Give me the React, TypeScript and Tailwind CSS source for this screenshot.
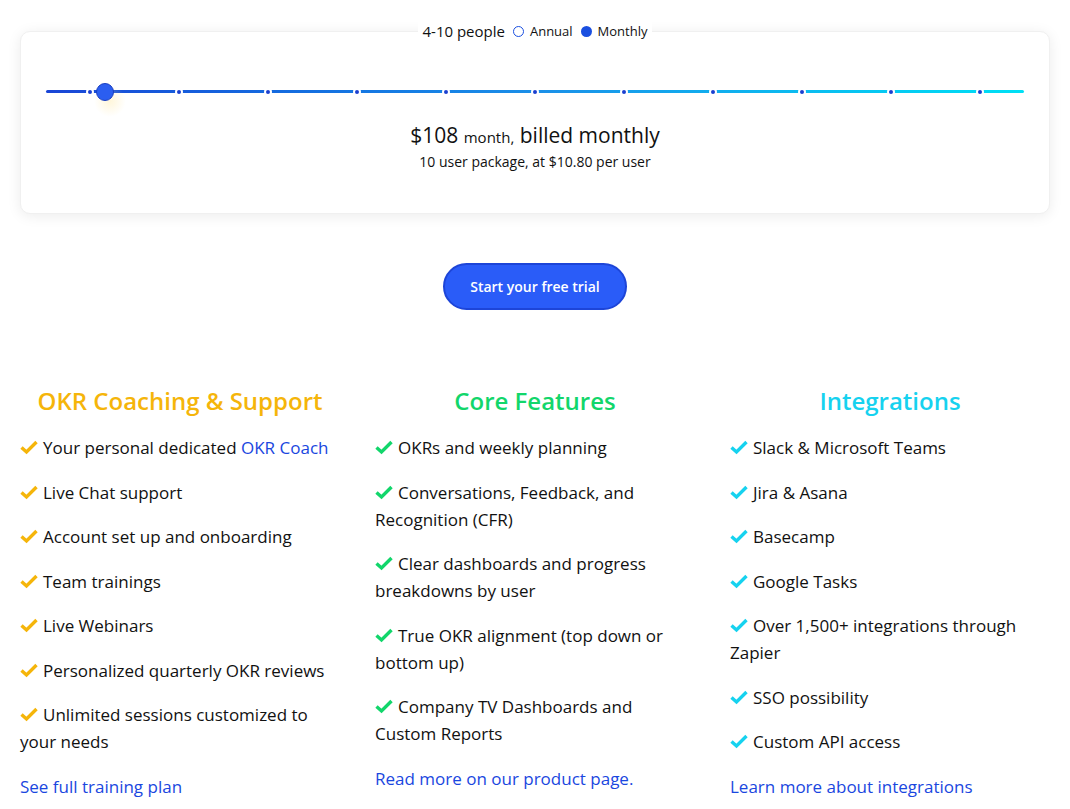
import React from "react";

const cols = [
  {
    title: "OKR Coaching & Support",
    color: "text-[#f5b50a]",
    items: [
      <>Your personal dedicated <a className="text-[#1a47e0]">OKR Coach</a></>,
      <>Live Chat support</>,
      <>Account set up and onboarding</>,
      <>Team trainings</>,
      <>Live Webinars</>,
      <>Personalized quarterly OKR reviews</>,
      <>Unlimited sessions customized to your needs</>,
    ],
    link: "See full training plan",
  },
  {
    title: "Core Features",
    color: "text-[#12d66b]",
    items: [
      <>OKRs and weekly planning</>,
      <>Conversations, Feedback, and Recognition (CFR)</>,
      <>Clear dashboards and progress breakdowns by user</>,
      <>True OKR alignment (top down or bottom up)</>,
      <>Company TV Dashboards and Custom Reports</>,
    ],
    link: "Read more on our product page.",
  },
  {
    title: "Integrations",
    color: "text-[#16d2ef]",
    items: [
      <>Slack &amp; Microsoft Teams</>,
      <>Jira &amp; Asana</>,
      <>Basecamp</>,
      <>Google Tasks</>,
      <>Over 1,500+ integrations through Zapier</>,
      <>SSO possibility</>,
      <>Custom API access</>,
    ],
    link: "Learn more about integrations",
  },
];

function Check({ className }: { className: string }) {
  return (
    <svg
      viewBox="0 0 18 15"
      className={`inline-block w-[18px] h-[15px] mr-[5px] align-[-1px] ${className}`}
      fill="none"
      stroke="currentColor"
      strokeWidth="3.4"
      strokeLinecap="butt"
      strokeLinejoin="miter"
    >
      <path d="M1.5 7.5 L6.5 12 L16.5 2" />
    </svg>
  );
}

export default function App() {
  return (
    <div
      className="w-[1070px] h-[809px] overflow-hidden bg-white text-[#111]"
      style={{ fontFamily: "'Open Sans', 'Noto Sans', sans-serif" }}
    >
      <div className="pt-[31px] px-[20px]">
        <div className="relative h-[183px] rounded-[10px] bg-white shadow-[0_2px_14px_rgba(0,0,0,0.08)] border border-[#f0f0f0]">
          <div className="absolute left-0 right-0 top-[-12px] flex justify-center">
            <div className="flex items-center gap-[6px] bg-white px-[4px] text-[13px]">
              <span className="text-[15px] font-medium mr-[2px]">4-10 people</span>
              <span className="w-[11px] h-[11px] rounded-full border-[1.5px] border-[#1a4fe0]"></span>
              <span>Annual</span>
              <span className="w-[11px] h-[11px] rounded-full bg-[#1a4fe0] ml-[2px]"></span>
              <span>Monthly</span>
            </div>
          </div>
          <div className="pt-[58px] px-[25px]">
            <div className="relative h-[3px] rounded-full bg-gradient-to-r from-[#1a45d6] via-[#1b8fe8] to-[#00e0f5]">
              <div className="absolute inset-0 flex">
                {Array.from({ length: 11 }).map((_, i) => (
                  <div key={i} className="flex-1 flex justify-center items-center">
                    <span className="w-[8px] h-[8px] rounded-full bg-[#1a3fd0] border-2 border-white shrink-0"></span>
                  </div>
                ))}
              </div>
              <div className="absolute left-[48px] top-[-5px] w-[32px] h-[32px] rounded-full bg-[radial-gradient(circle,rgba(255,230,150,0.35),rgba(255,255,255,0)_70%)]"></div>
              <div className="absolute left-[50px] top-[-7.5px] w-[18px] h-[18px] rounded-full bg-[#2b5ef0] border border-[#1a3fc0]"></div>
            </div>
          </div>
          <div className="mt-[27px] text-center">
            <div className="text-[21px] leading-[30px]">
              $108 <span className="text-[15px]">month,</span> billed monthly
            </div>
            <div className="text-[14px] leading-[20px]">10 user package, at $10.80 per user</div>
          </div>
        </div>
      </div>

      <div className="flex justify-center mt-[49px]">
        <button className="w-[184px] h-[47px] rounded-full bg-[#2a5cf8] border-2 border-[#1d45d8] text-white text-[14px] font-semibold">
          Start your free trial
        </button>
      </div>

      <div className="grid grid-cols-3 gap-[35px] px-[20px] mt-[74px]">
        {cols.map((c) => (
          <div key={c.title}>
            <h2 className={`text-center text-[24px] leading-[34px] font-semibold ${c.color}`}>{c.title}</h2>
            <ul className="mt-[16px] flex flex-col gap-[17.5px]">
              {c.items.map((it, i) => (
                <li key={i} className="text-[17px] leading-[27px]">
                  <Check className={c.color} />
                  {it}
                </li>
              ))}
            </ul>
            <a className="block mt-[18px] text-[17px] leading-[27px] text-[#1a47e0]">{c.link}</a>
          </div>
        ))}
      </div>
    </div>
  );
}
